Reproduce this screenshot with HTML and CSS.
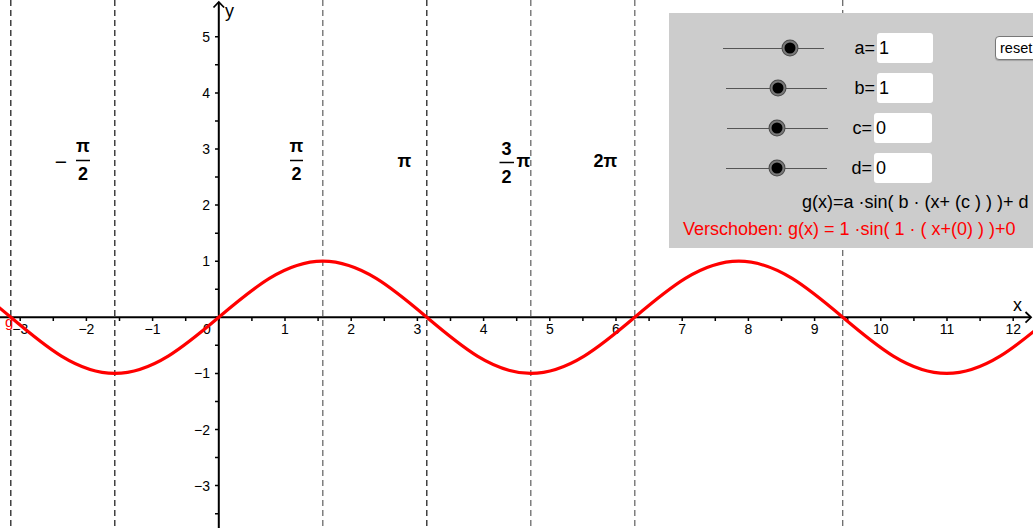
FILE: index.html
```html
<!DOCTYPE html>
<html>
<head>
	<title>Verschobene Sinusfunktion</title>
	<link rel="stylesheet" href="styles.css">
</head>
<body>
	<div class="view">
		<svg class="graph" width="1033" height="528" viewBox="0 0 1033 528">
			<!-- multiples of pi/2 -->
			<g class="guides">
				<line class="guide dark" x1="10.8" y1="0" x2="10.8" y2="528"/>
				<line class="guide dark" x1="114.8" y1="0" x2="114.8" y2="528"/>
				<line class="guide grey" x1="322.8" y1="0" x2="322.8" y2="528"/>
				<line class="guide dark" x1="426.8" y1="0" x2="426.8" y2="528"/>
				<line class="guide grey" x1="530.8" y1="0" x2="530.8" y2="528"/>
				<line class="guide grey" x1="634.8" y1="0" x2="634.8" y2="528"/>
				<line class="guide grey" x1="842.7" y1="0" x2="842.7" y2="528"/>
			</g>

			<!-- axes -->
			<line class="axis" x1="0" y1="317.3" x2="1031" y2="317.3"/>
			<line class="axis" x1="218.8" y1="528" x2="218.8" y2="2"/>
			<polyline class="arrow" points="1025.5,312 1031,317.3 1025.5,322.6"/>
			<polyline class="arrow" points="213.5,7.5 218.8,2 224.1,7.5"/>
			<line class="ticks" x1="19.45" y1="319.5" x2="1015" y2="319.5" stroke-dasharray="1.5 31.6"/>
			<line class="ticks" x1="216.5" y1="36.05" x2="216.5" y2="520" stroke-dasharray="1.5 26.55"/>

			<text class="axis-name" x="1013" y="311">x</text>
			<text class="axis-name" x="225" y="17">y</text>

			<g class="tick-label xl">
				<text x="20.2" y="334">−3</text>
				<text x="86.4" y="334">−2</text>
				<text x="152.6" y="334">−1</text>
				<text x="207" y="334">0</text>
				<text x="285" y="334">1</text>
				<text x="351.2" y="334">2</text>
				<text x="417.4" y="334">3</text>
				<text x="483.6" y="334">4</text>
				<text x="549.8" y="334">5</text>
				<text x="616" y="334">6</text>
				<text x="682.2" y="334">7</text>
				<text x="748.4" y="334">8</text>
				<text x="814.6" y="334">9</text>
				<text x="880.8" y="334">10</text>
				<text x="947" y="334">11</text>
				<text x="1013.2" y="334">12</text>
			</g>
			<g class="tick-label yl">
				<text x="210" y="41.8">5</text>
				<text x="210" y="97.9">4</text>
				<text x="210" y="154">3</text>
				<text x="210" y="210.1">2</text>
				<text x="210" y="266.2">1</text>
				<text x="210" y="378.4">−1</text>
				<text x="210" y="434.5">−2</text>
				<text x="210" y="490.6">−3</text>
			</g>

			<!-- pi labels -->
			<g class="pi-label">
				<text class="minus" x="61" y="168.5">−</text>
				<text x="83" y="152">π</text>
				<line class="bar" x1="76" y1="160.5" x2="90" y2="160.5"/>
				<text x="83" y="180">2</text>

				<text x="296.5" y="152">π</text>
				<line class="bar" x1="290" y1="160.5" x2="303" y2="160.5"/>
				<text x="296.5" y="180">2</text>

				<text x="404.5" y="167">π</text>

				<text x="506.5" y="155">3</text>
				<line class="bar" x1="499.5" y1="162.5" x2="514" y2="162.5"/>
				<text x="506.5" y="183">2</text>
				<text x="523.5" y="167">π</text>

				<text x="605.5" y="167">2π</text>
			</g>

			<!-- g(x) = sin(x), drawn in axis units -->
			<path class="curve" transform="translate(218.8 317.3) scale(66.2 -56.1)"
				d="M -6.2832 0 C -5.7709 0.5123 -5.2809 1 -4.7124 1
				S -3.6539 0.5123 -3.1416 0 S -2.1393 -1 -1.5708 -1
				S -0.5123 -0.5123 0 0 S 1.0023 1 1.5708 1
				S 2.6293 0.5123 3.1416 0 S 4.1439 -1 4.7124 -1
				S 5.7709 -0.5123 6.2832 0 S 7.2855 1 7.854 1
				S 8.9125 0.5123 9.4248 0 S 10.4271 -1 10.9956 -1
				S 12.0541 -0.5123 12.5664 0 S 13.5685 1 14.1372 1"/>
			<text class="curve-name" x="5" y="327">g</text>
		</svg>

		<div class="panel">
			<div class="row row-a">
				<div class="slider"><span class="knob" style="left: 66%"></span></div>
				<span class="lbl">a=</span>
				<span class="field">1</span>
				<button class="reset">reset</button>
			</div>
			<div class="row row-b">
				<div class="slider"><span class="knob" style="left: 51.5%"></span></div>
				<span class="lbl">b=</span>
				<span class="field">1</span>
			</div>
			<div class="row row-c">
				<div class="slider"><span class="knob" style="left: 49.5%"></span></div>
				<span class="lbl">c=</span>
				<span class="field">0</span>
			</div>
			<div class="row row-d">
				<div class="slider"><span class="knob" style="left: 50.5%"></span></div>
				<span class="lbl">d=</span>
				<span class="field">0</span>
			</div>
			<div class="formula">g(x)=a ·sin( b · (x+ (c ) ) )+ d</div>
			<div class="shifted">Verschoben: g(x) = 1 ·sin( 1 · ( x+(0) ) )+0</div>
		</div>
	</div>
</body>
</html>
```
FILE: styles.css
```css
html, body {
	margin: 0;
	padding: 0;
	background: #fff;
	overflow: hidden;
}
body {
	font-family: "Liberation Sans", Arial, sans-serif;
}
.view {
	position: relative;
	width: 1033px;
	height: 528px;
	overflow: hidden;
}
.graph {
	display: block;
}

/* graph */
.guide {
	stroke-width: 1.3;
	stroke-dasharray: 6 4;
}
.guide.dark {
	stroke: #222;
}
.guide.grey {
	stroke: #6a6a6a;
}
.axis {
	stroke: #000;
	stroke-width: 2;
}
.arrow {
	fill: none;
	stroke: #000;
	stroke-width: 1.8;
}
.ticks {
	stroke: #000;
	stroke-width: 3;
}
.axis-name {
	font-family: "Liberation Sans", Arial, sans-serif;
	font-size: 18px;
	fill: #000;
}
.tick-label {
	font-family: "Liberation Sans", Arial, sans-serif;
	font-size: 14px;
	fill: #000;
}
.xl {
	text-anchor: middle;
}
.yl {
	text-anchor: end;
}
.pi-label {
	font-family: "Liberation Sans", Arial, sans-serif;
	font-weight: bold;
	font-size: 18px;
	fill: #000;
	text-anchor: middle;
}
.pi-label .minus {
	font-weight: normal;
	font-size: 21px;
}
.bar {
	stroke: #000;
	stroke-width: 1.5;
}
.curve {
	fill: none;
	stroke: #ff0000;
	stroke-width: 3.2;
	stroke-linejoin: round;
	vector-effect: non-scaling-stroke;
}
.curve-name {
	font-family: "Liberation Sans", Arial, sans-serif;
	font-size: 15px;
	fill: #ff0000;
}

/* slider panel */
.panel {
	position: absolute;
	left: 669px;
	top: 13px;
	width: 380px;
	height: 235px;
	box-sizing: border-box;
	padding-top: 15px;
	background: #cccccc;
	color: #000;
	font-size: 18px;
}
.row {
	display: grid;
	grid-template-columns: 159px 49px 56px auto;
	align-items: center;
	height: 40px;
}
.row-c,
.row-d {
	grid-template-columns: 159px 46px 58px auto;
}
.slider {
	position: relative;
	width: 101px;
	height: 1px;
	margin-left: 57px;
	background: #555;
}
.row-a .slider {
	margin-left: 54px;
}
.row-c .slider {
	margin-left: 58px;
}
.knob {
	position: absolute;
	top: 0;
	width: 11px;
	height: 11px;
	border-radius: 50%;
	background: #000;
	border: 2px solid #7a7a7a;
	box-shadow: 0 0 0 1px #4a4a4a;
	transform: translate(-50%, -50%);
}
.lbl {
	text-align: right;
	padding-right: 2px;
}
.field {
	height: 30px;
	line-height: 30px;
	padding-left: 2px;
	background: #fff;
	border-radius: 3px;
}
.reset {
	justify-self: start;
	margin-left: 62px;
	width: 60px;
	height: 24px;
	padding: 0 0 0 4px;
	text-align: left;
	font-family: "Liberation Sans", Arial, sans-serif;
	font-size: 14.5px;
	color: #000;
	background: #fff;
	border: 1px solid #777;
	border-radius: 4px;
	box-shadow: 0 1px 1px rgba(0, 0, 0, 0.2);
}
.formula {
	margin-top: 1px;
	padding-left: 133px;
	line-height: 27px;
	white-space: nowrap;
}
.shifted {
	padding-left: 14px;
	line-height: 27px;
	color: #ff0000;
	white-space: nowrap;
}
```
